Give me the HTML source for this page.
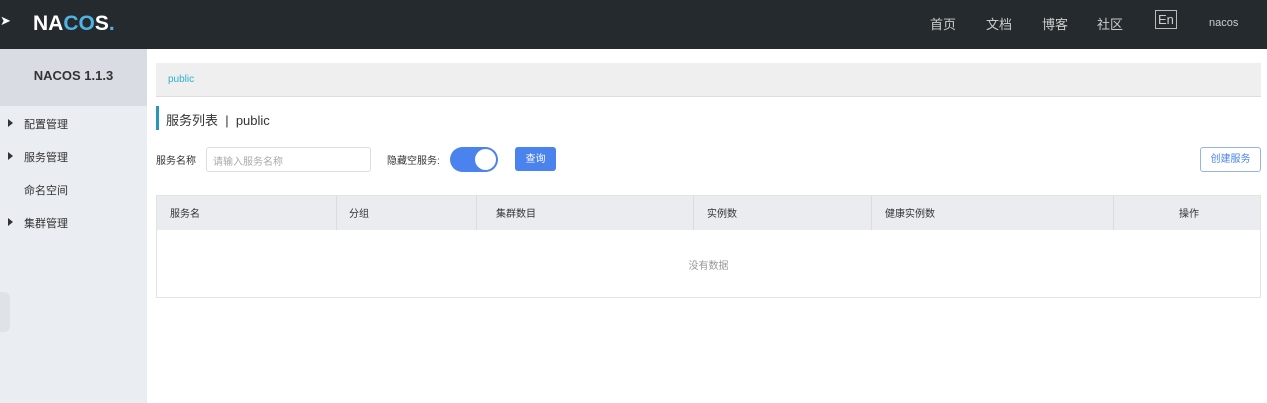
<!DOCTYPE html>
<html><head><meta charset="utf-8"><style>
*{margin:0;padding:0;box-sizing:border-box}
body{width:1267px;height:403px;overflow:hidden;background:#fff;font-family:"Liberation Sans","Noto Sans CJK SC",sans-serif;font-size:12px;color:#333;position:relative}
.top{position:absolute;left:0;top:0;width:1267px;height:49px;background:#252a2f}
.logo{position:absolute;left:33px;top:12px;color:#fff;font-size:21px;font-weight:bold;letter-spacing:0px}
.nav{position:absolute;top:14px;color:#ccc;font-size:13px}
.side{position:absolute;left:0;top:49px;width:147px;height:354px;background:#eaedf1}
.side .h{height:57px;background:#d9dde3;text-align:center;line-height:54px;font-weight:bold;font-size:13px;color:#333}
.mi{position:absolute;left:24px;font-size:11px;color:#333}
.tri{position:absolute;left:8px;width:0;height:0;border-left:5px solid #333;border-top:4px solid transparent;border-bottom:4px solid transparent}
.abs{position:absolute}
</style></head><body>
<div class="top">
<div class="abs" style="left:0;top:13px;color:#fff;font-size:13px">➤</div>
<div class="logo">NA<span style="color:#4fb3e0">CO</span>S<span style="color:#4fb3e0">.</span></div>
<div class="nav" style="left:930px">首页</div>
<div class="nav" style="left:986px">文档</div>
<div class="nav" style="left:1042px">博客</div>
<div class="nav" style="left:1097px">社区</div>
<div class="nav" style="left:1155px;top:10px;border:1px solid #bbb;padding:1px 2px;font-size:13px">En</div>
<div class="nav" style="left:1209px;top:17px;font-size:11px">nacos</div>
</div>
<div class="side"><div class="h">NACOS 1.1.3</div></div>
<div class="tri" style="top:119px"></div><div class="mi" style="top:116px">配置管理</div>
<div class="tri" style="top:152px"></div><div class="mi" style="top:149px">服务管理</div>
<div class="mi" style="top:182px">命名空间</div>
<div class="tri" style="top:218px"></div><div class="mi" style="top:215px">集群管理</div>
<div class="abs" style="left:0;top:292px;width:10px;height:40px;background:#dfe2e6;border-radius:0 6px 6px 0"></div>
<div class="abs" style="left:156px;top:63px;width:1105px;height:34px;background:#efefef;border-bottom:1px solid #ddd;padding:11px 12px;color:#2eb0c8;font-size:10px">public</div>
<div class="abs" style="left:156px;top:106px;width:3px;height:24px;background:#2a97b5"></div>
<div class="abs" style="left:166px;top:110px;font-size:13px;color:#333">服务列表 &nbsp;| &nbsp;public</div>
<div class="abs" style="left:156px;top:152px;font-size:10px;color:#333">服务名称</div>
<div class="abs" style="left:206px;top:147px;width:165px;height:25px;border:1px solid #ddd;border-radius:3px;padding:5px 6px;font-size:10px;color:#aaa">请输入服务名称</div>
<div class="abs" style="left:387px;top:152px;font-size:10px;color:#333">隐藏空服务:</div>
<div class="abs" style="left:450px;top:147px;width:48px;height:25px;background:#4a82ee;border-radius:13px"><div style="position:absolute;right:2px;top:2px;width:21px;height:21px;background:#fff;border-radius:50%"></div></div>
<div class="abs" style="left:515px;top:147px;width:41px;height:24px;background:#4a82ee;border-radius:3px;color:#fff;font-size:10px;text-align:center;line-height:25px">查询</div>
<div class="abs" style="left:1200px;top:147px;width:61px;height:25px;border:1px solid #9ab3e6;border-radius:3px;color:#4a82ee;font-size:10px;text-align:center;line-height:24px">创建服务</div>
<div class="abs" style="left:156px;top:195px;width:1105px;height:103px;border:1px solid #e3e3e3">
<div style="height:34px;background:#ebecf0;position:relative;font-size:10px;color:#333">
<span class="abs" style="left:13px;top:9px">服务名</span>
<span class="abs" style="left:192px;top:9px">分组</span>
<span class="abs" style="left:339px;top:9px">集群数目</span>
<span class="abs" style="left:550px;top:9px">实例数</span>
<span class="abs" style="left:728px;top:9px">健康实例数</span>
<span class="abs" style="left:1022px;top:9px">操作</span>
<i class="abs" style="left:179px;top:0;width:1px;height:34px;background:#dcdcdc"></i>
<i class="abs" style="left:319px;top:0;width:1px;height:34px;background:#dcdcdc"></i>
<i class="abs" style="left:536px;top:0;width:1px;height:34px;background:#dcdcdc"></i>
<i class="abs" style="left:714px;top:0;width:1px;height:34px;background:#dcdcdc"></i>
<i class="abs" style="left:956px;top:0;width:1px;height:34px;background:#dcdcdc"></i>
</div>
<div style="text-align:center;padding-top:27px;font-size:10px;color:#999">没有数据</div>
</div>
</body></html>
